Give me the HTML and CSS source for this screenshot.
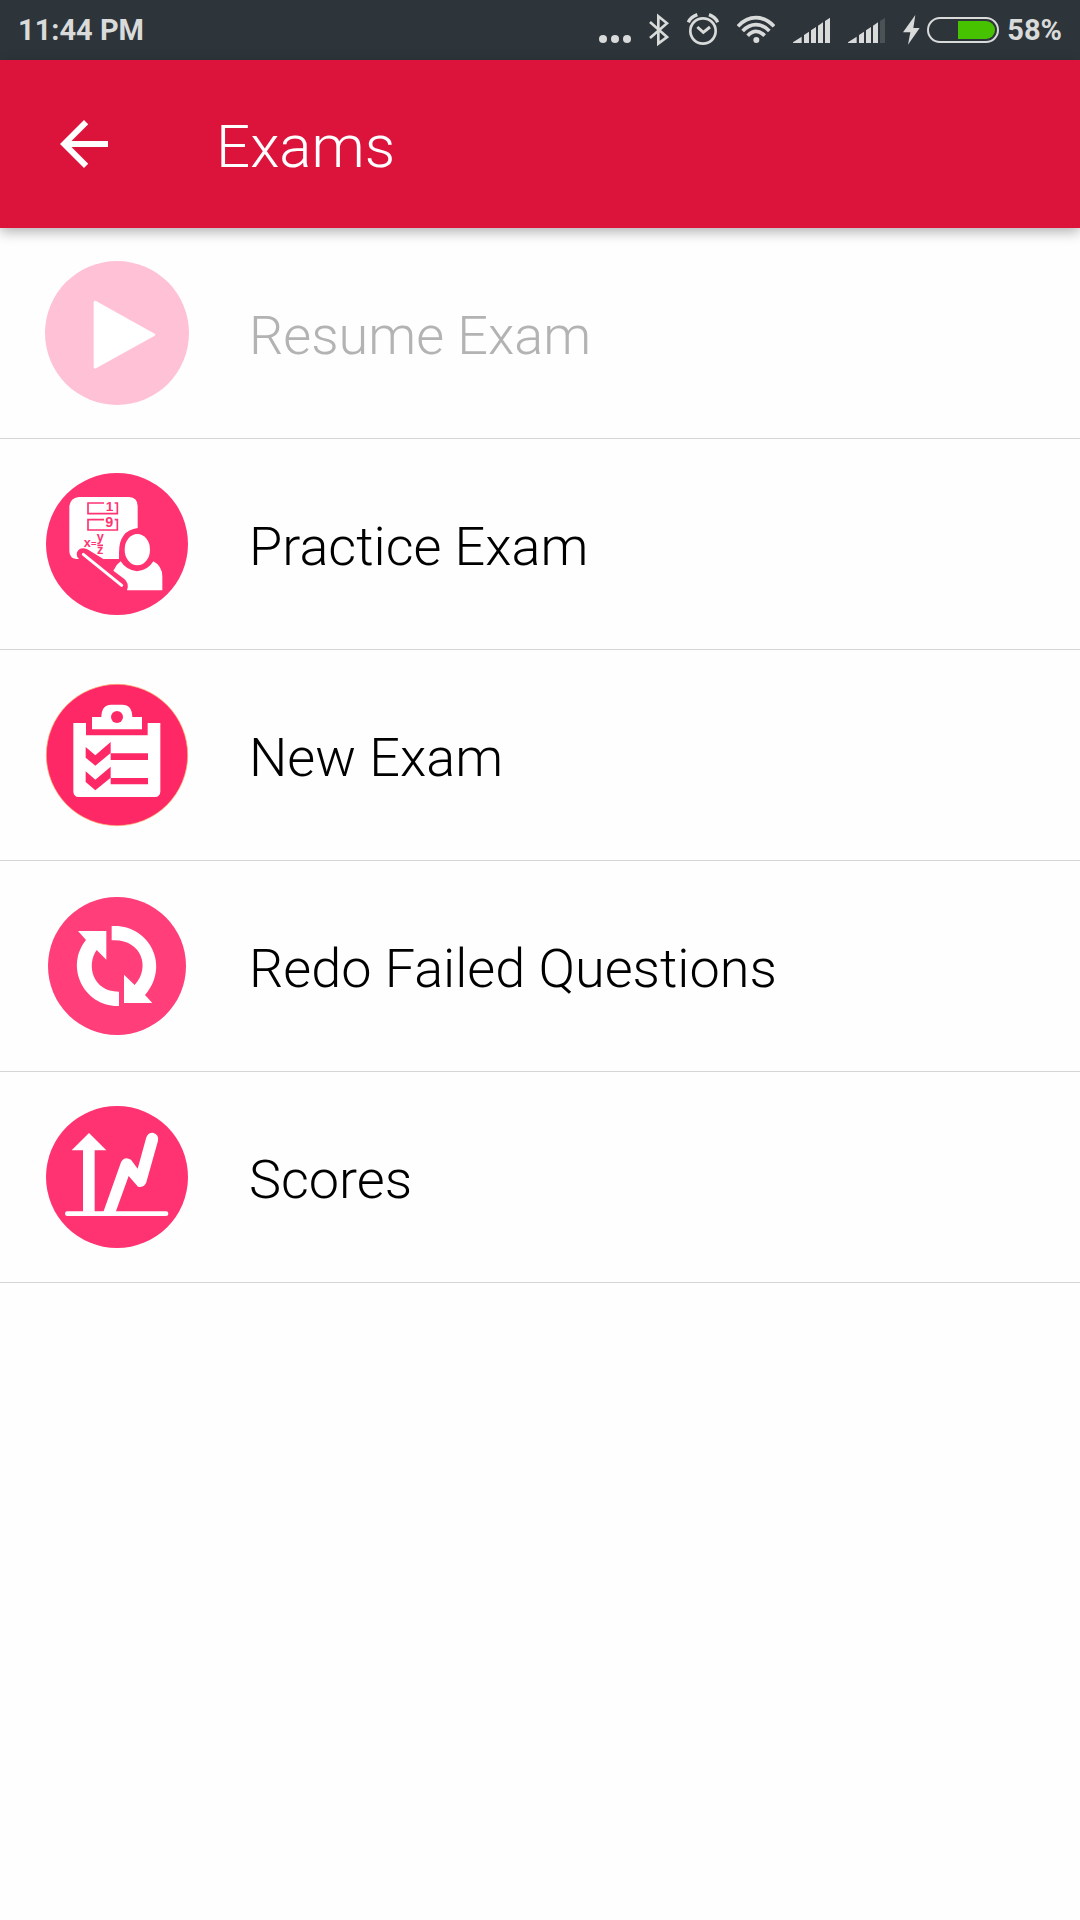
FILE: index.html
```html
<!DOCTYPE html>
<html lang="en">
<head>
<meta charset="utf-8">
<meta name="viewport" content="width=device-width, initial-scale=1">
<title>Exams</title>
<link rel="stylesheet" href="styles.css">
</head>
<body>
<div class="status-bar">
  <span class="clock">11:44 PM</span>
  <div class="indicators">
    <svg width="32" height="60" viewBox="60 0 96 180" aria-hidden="true"><circle cx="72" cy="117" r="12"/><circle cx="108" cy="117" r="12"/><circle cx="144" cy="117" r="12"/></svg>
    <svg width="20" height="60" viewBox="210 0 60 180" aria-hidden="true"><path class="line" stroke-width="8" d="M213 66L264 111L238 131V49L264 70L213 114"/></svg>
    <svg width="32" height="60" viewBox="324 0 96 180" aria-hidden="true"><circle class="line" cx="372" cy="93" r="38" stroke-width="8"/><path class="line" stroke-width="9" d="M355 81L373 97L393 81"/><path class="line" stroke-width="10" d="M328 67Q335 51 355 44M416 67Q409 51 390 44"/></svg>
    <svg width="38" height="60" viewBox="473 0 114 180" aria-hidden="true"><circle cx="531" cy="120" r="9"/><path class="line" stroke-width="11" d="M476 79Q500 53 530 53T584 79M490 93Q508 74 530 74T570 93M505 107Q517 94 530 94T556 107"/></svg>
    <svg width="37" height="60" viewBox="42 0 111 180" aria-hidden="true"><path d="M42 127L68 110V129H42ZM75 105L90 95V129H75ZM96 91L111 81V129H96ZM117 77L132 67V129H117ZM138 63L153 53V129H138Z"/></svg>
    <svg width="37" height="60" viewBox="42 0 111 180" aria-hidden="true"><path d="M42 127L68 110V129H42ZM75 105L90 95V129H75ZM96 91L111 81V129H96ZM117 77L132 67V129H117Z"/><path class="faint" d="M138 63L153 53V129H138Z"/></svg>
    <div class="battery">
      <svg width="17" height="60" viewBox="371 0 51 180" aria-hidden="true"><path d="M408 45L371 97H393L386 134L421 84H402Z"/></svg>
      <svg width="72" height="60" viewBox="444 0 216 180" aria-hidden="true"><rect class="line" x="447" y="54" width="210" height="72" rx="36" stroke-width="6"/><path class="charge" d="M537 63H621A27 27 0 0 1 621 117H537Z"/></svg>
    </div>
  </div>
  <span class="percent">58%</span>
</div>

<header class="app-bar">
  <button class="back" type="button" aria-label="Back">
    <svg width="72" height="72" viewBox="0 0 24 24" aria-hidden="true"><path d="M20 11H7.83l5.59-5.59L12 4l-8 8 8 8 1.41-1.41L7.83 13H20z"/></svg>
  </button>
  <h1 class="title">Exams</h1>
</header>

<main>
  <ul class="menu">
    <li class="menu-row">
      <button class="item" type="button" disabled>
        <svg class="badge" viewBox="45 33 432 432" aria-hidden="true"><circle class="pale" cx="261" cy="249" r="216"/><path class="white" d="M191 157Q191 151 198 153L374 251Q378 254 374 257L198 355Q191 357 191 351Z"/></svg>
        <span>Resume Exam</span>
      </button>
    </li>
    <li class="menu-row">
      <button class="item" type="button">
        <svg class="badge" viewBox="45 36 432 432" aria-hidden="true">
          <circle class="rose" cx="261" cy="252" r="213"/>
          <path class="white" d="M146 111H297Q323 113 323 138V204Q267 211 267 278V297H220L172 268Q150 258 141 277Q138 290 147 297H139Q118 294 118 273V138Q121 114 146 111Z"/>
          <path class="rose-line" stroke-width="5" d="M222 129H174V161H262V129H254M222 179H174V210H262V179H254M202 256H219"/>
          <g class="formula"><text x="227" y="152" font-size="41">1</text><text x="226" y="201" font-size="43">9</text><text x="161" y="262" font-size="38">x</text><text x="183" y="260" font-size="28">=</text><text x="200" y="243" font-size="38">y</text><text x="201" y="281" font-size="38">z</text></g>
          <path class="white-line" stroke-width="9" d="M160 283L275 376"/>
          <ellipse class="white" cx="322" cy="269" rx="38" ry="47"/>
          <path class="white" d="M272 304Q288 330 321 334Q354 331 370 304Q397 318 397 350V391H291Q299 371 283 357L250 332Q257 315 272 304Z"/>
        </svg>
        <span>Practice Exam</span>
      </button>
    </li>
    <li class="menu-row">
      <button class="item" type="button">
        <svg class="badge" viewBox="45 39 432 432" aria-hidden="true">
          <circle class="red" cx="261" cy="255" r="212" stroke="#ffb06a" stroke-width="2"/>
          <path class="white" d="M186 141H214Q215 104 244 104H277Q306 104 307 141H336V178H186ZM130 159H168V196H353V159H391V365Q390 380 375 381H146Q131 380 130 365Z"/>
          <circle class="red" cx="261" cy="141" r="18"/>
          <path class="red" d="M167 231L196 256L242 216V250H354V270H242V249L196 287L167 263ZM167 304L196 329L242 290V324H354V343H242V323L196 361L167 336Z"/>
        </svg>
        <span>New Exam</span>
      </button>
    </li>
    <li class="menu-row">
      <button class="item" type="button">
        <svg class="badge" viewBox="45 42 432 432" aria-hidden="true">
          <circle class="pink" cx="261" cy="258" r="207"/>
          <path class="white" d="M144 153H229V239L200 210C167 257 190 336 267 335V378C162 381 103 260 168 180ZM245 138C355 130 424 256 345 345L367 369H282V284L314 315C366 258 329 174 245 181Z"/>
        </svg>
        <span>Redo Failed Questions</span>
      </button>
    </li>
    <li class="menu-row">
      <button class="item" type="button">
        <svg class="badge" viewBox="45 45 432 432" aria-hidden="true">
          <circle class="rose" cx="261" cy="261" r="213"/>
          <path class="white" d="M177 129L229 181H194V365H159V181H125ZM220 366L273 217Q283 197 303 209L323 236L349 142Q354 127 369 128Q387 133 384 152L349 277Q343 294 324 290L296 258L257 366Z"/>
          <path class="white-line" stroke-width="14" d="M112 371H408"/>
        </svg>
        <span>Scores</span>
      </button>
    </li>
  </ul>
</main>
</body>
</html>
```
FILE: styles.css
```css
* {
  box-sizing: border-box;
}

body {
  margin: 0;
  background: #fefefe;
  color: #000;
  font-family: Roboto, "Liberation Sans", sans-serif;
}

svg {
  display: block;
  flex: none;
}

/* Status bar */
.status-bar {
  display: flex;
  align-items: center;
  height: 60px;
  padding: 0 18px;
  background: #2d353b;
  color: #d9dada;
  fill: #d9dada;
  font-size: 29px;
  font-weight: 700;
  line-height: 62px;
}

.indicators {
  display: flex;
  gap: 18px;
  margin-left: auto;
}

.battery {
  display: flex;
  gap: 7px;
}

.percent {
  margin-left: 8px;
}

.line {
  fill: none;
  stroke: #d9dada;
}

.faint {
  fill: #4c5357;
}

.charge {
  fill: #47c200;
}

/* App bar */
.app-bar {
  position: relative;
  display: flex;
  align-items: center;
  gap: 96px;
  height: 168px;
  padding: 0 48px;
  background: #dc143c;
  color: #fff;
  box-shadow: 0 4px 12px rgba(0, 0, 0, 0.3);
}

.back {
  padding: 0;
  border: 0;
  background: none;
  fill: #fff;
}

.title {
  margin: 0;
  padding-top: 6px;
  font-size: 60px;
  font-weight: 300;
  line-height: 72px;
}

/* Menu */
.menu {
  margin: 0;
  padding: 0;
  list-style: none;
}

.menu-row {
  border-bottom: 1px solid #d5d5d5;
}

.item {
  display: flex;
  align-items: center;
  gap: 60px;
  width: 100%;
  height: 210px;
  padding: 0 45px;
  border: 0;
  background: none;
  color: #000;
  font-family: inherit;
  font-size: 54px;
  font-weight: 300;
  line-height: 64px;
  text-align: left;
}

.item:disabled {
  color: #b3b3b3;
}

.item span {
  padding-top: 5px;
}

.badge {
  width: 144px;
  height: 144px;
}

.pale {
  fill: #ffc1d6;
}

.rose {
  fill: #ff3371;
}

.red {
  fill: #ff2867;
}

.pink {
  fill: #ff3e7a;
}

.white {
  fill: #fff;
}

.white-line {
  fill: none;
  stroke: #fff;
  stroke-linecap: round;
}

.rose-line {
  fill: none;
  stroke: #ff3371;
}

.formula {
  fill: #ff3371;
  font-family: "Liberation Sans", sans-serif;
  font-weight: 700;
}
```
